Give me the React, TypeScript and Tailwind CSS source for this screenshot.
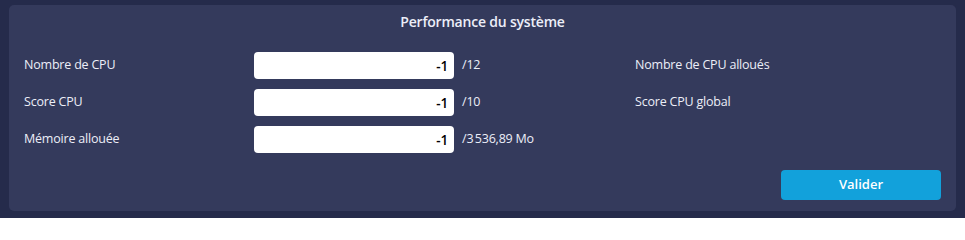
export default function App() {
  const rows = [
    { label: 'Nombre de CPU', suffix: '/12', extra: 'Nombre de CPU alloués' },
    { label: 'Score CPU', suffix: '/10', extra: 'Score CPU global' },
    { label: 'Mémoire allouée', suffix: '/3\u202F536,89 Mo', extra: '' },
  ];

  return (
    <div
      className="w-[965px] h-[218px] bg-[#252b4b] pt-[5px] px-[9px] text-[#eceef8]"
      style={{ fontFamily: '"Open Sans", "Noto Sans", sans-serif' }}
    >
      <div className="h-[206px] rounded-[5px] bg-[#343a5c] px-[15px] pt-[7px] pb-[11px] flex flex-col">
        <h2 className="text-center text-[14px] leading-[20px] font-semibold tracking-[-0.2px]">
          Performance du système
        </h2>

        {/* Form rows */}
        <div className="mt-[20px] flex flex-col gap-[10px]">
          {rows.map((row) => (
            <div
              key={row.label}
              className="grid grid-cols-[230px_200px_181px_1fr] items-center h-[27px] text-[12.5px] tracking-[-0.2px]"
            >
              <span>{row.label}</span>
              <input
                readOnly
                value="-1"
                className="h-[27px] w-[200px] rounded-[4px] bg-white px-[6px] text-right text-[13.5px] font-semibold text-black outline-none"
              />
              <span className="pl-[8px]">{row.suffix}</span>
              <span>{row.extra}</span>
            </div>
          ))}
        </div>

        <div className="mt-auto flex justify-end">
          <button className="h-[30px] w-[160px] rounded-[4px] bg-[#12a1db] text-[13px] font-semibold text-white">
            Valider
          </button>
        </div>
      </div>
    </div>
  );
}
